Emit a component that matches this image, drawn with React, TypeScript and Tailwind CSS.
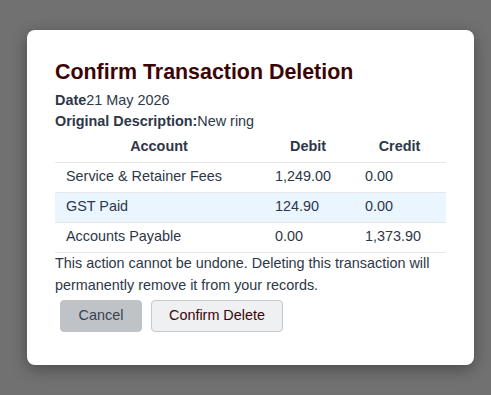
import React from "react";

const rows = [
  { account: "Service & Retainer Fees", debit: "1,249.00", credit: "0.00" },
  { account: "GST Paid", debit: "124.90", credit: "0.00" },
  { account: "Accounts Payable", debit: "0.00", credit: "1,373.90" },
];

export default function App() {
  return (
    <div className="min-h-[395px] w-full bg-[#707170] pt-[30px] pl-[27px] font-['Liberation_Sans',Arial,sans-serif]">
      <div className="w-[447px] h-[335px] bg-white rounded-lg shadow-[0_4px_16px_rgba(0,0,0,0.35)] p-7">
        <h2 className="text-[21.4px] leading-6 font-bold text-[#3b0505] mt-[2px]">Confirm Transaction Deletion</h2>
        <p className="text-[14.4px] leading-[21px] text-[#2d3748] mt-[6px]">
          <strong>Date</strong>21 May 2026
        </p>
        <p className="text-[14.4px] leading-[21px] text-[#2d3748]">
          <strong>Original Description:</strong>New ring
        </p>
        <table className="w-full text-[14.4px] text-[#2d3748] border-collapse">
          <thead>
            <tr className="h-[30px] border-b border-[#e5e7eb]">
              <th className="w-[208px] font-bold">Account</th>
              <th className="w-[90px] font-bold">Debit</th>
              <th className="font-bold">Credit</th>
            </tr>
          </thead>
          <tbody>
            {rows.map((r, i) => (
              <tr key={r.account} className={"h-[30px] border-b border-[#e5e7eb] " + (i === 1 ? "bg-[#ebf5ff]" : "")}>
                <td className="px-[11px]">{r.account}</td>
                <td className="px-3">{r.debit}</td>
                <td className="px-3">{r.credit}</td>
              </tr>
            ))}
          </tbody>
        </table>
        <p className="text-[14.4px] leading-[22px] text-[#2d3748] -mt-[1px]">
          This action cannot be undone. Deleting this transaction will permanently remove it from your records.
        </p>
        <div className="flex gap-[9px] pl-[5px] mt-[4px]">
          <button className="h-8 w-[82px] rounded bg-[#bfc3c7] text-[14.4px] text-[#374151] border border-[#bfc3c7]">Cancel</button>
          <button className="h-8 w-[132px] rounded bg-[#eef0f2] text-[14.4px] text-[#3b0505] border border-[#c5c9cc]">Confirm Delete</button>
        </div>
      </div>
    </div>
  );
}
